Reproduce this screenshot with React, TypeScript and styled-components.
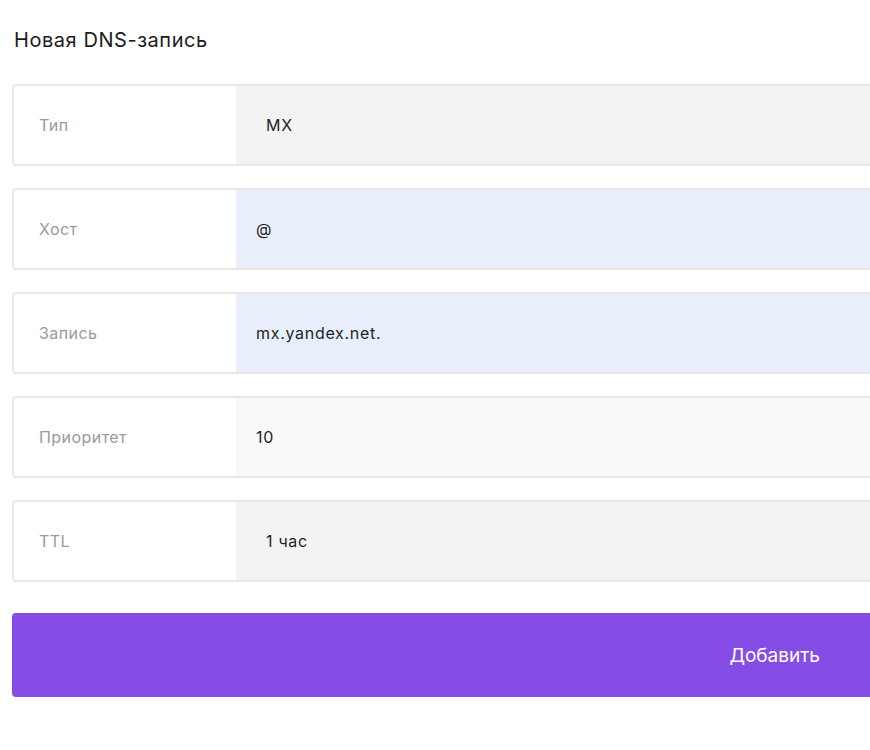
import { styled, createGlobalStyle } from "styled-components";

const GlobalStyle = createGlobalStyle`
    html, body {
        margin: 0;
        padding: 0;
        background: #ffffff;
        overflow: hidden;
    }
    body {
        font-family: Inter, "Noto Sans", "Liberation Sans", sans-serif;
        color: #1f1f1f;
    }
    `;

const Page = styled.div`
    width: 870px;
    height: 750px;
    padding: 28px 0 0 12px;
    box-sizing: border-box;
    overflow: hidden;
    `;

const Title = styled.h2`
    margin: 0 0 32px 2px;
    font-size: 20px;
    line-height: 24px;
    font-weight: 400;
    letter-spacing: 0.55px;
    color: #1c1c1c;
    `;

const Form = styled.div`
    width: 880px;
    display: flex;
    flex-direction: column;
    gap: 22px;
    `;

const Row = styled.div`
    display: grid;
    grid-template-columns: 222px 1fr;
    height: 82px;
    border: 2px solid #e7e7e7;
    border-radius: 4px;
    overflow: hidden;
    box-sizing: border-box;
    `;

const Label = styled.div`
    display: flex;
    align-items: center;
    padding-left: 25px;
    background: #ffffff;
    font-size: 16px;
    letter-spacing: 0.45px;
    color: #9a9a9a;
    `;

type Kind = "select" | "active" | "plain";

const fills: Record<Kind, string> = {
    select: "#f3f3f3",
    active: "#e8effb",
    plain: "#f9f9f9",
};

const Value = styled.div<{ $kind: Kind }>`
    display: flex;
    align-items: center;
    padding-left: ${(p) => (p.$kind === "select" ? "30px" : "20px")};
    background: ${(p) => fills[p.$kind]};
    font-size: 16px;
    letter-spacing: 0.7px;
    color: #1f1f1f;
    `;

const SubmitButton = styled.button`
    margin-top: 9px;
    height: 84px;
    display: flex;
    align-items: center;
    justify-content: flex-end;
    padding: 0 72px 0 0;
    border: none;
    border-radius: 4px;
    background: #854de5;
    color: #ffffff;
    font-family: inherit;
    font-size: 19px;
    font-weight: 400;
    cursor: pointer;
    `;

const fields: { label: string; value: string; kind: Kind }[] = [
    { label: "Тип", value: "MX", kind: "select" },
    { label: "Хост", value: "@", kind: "active" },
    { label: "Запись", value: "mx.yandex.net.", kind: "active" },
    { label: "Приоритет", value: "10", kind: "plain" },
    { label: "TTL", value: "1 час", kind: "select" },
];

const App = () => {
    return (
        <>
            <GlobalStyle />
            <Page>
                <Title>Новая DNS-запись</Title>
                <Form>
                    {fields.map((f) => (
                        <Row key={f.label}>
                            <Label>{f.label}</Label>
                            <Value $kind={f.kind}>{f.value}</Value>
                        </Row>
                    ))}
                    <SubmitButton>Добавить</SubmitButton>
                </Form>
            </Page>
        </>
    );
};

export default App;
